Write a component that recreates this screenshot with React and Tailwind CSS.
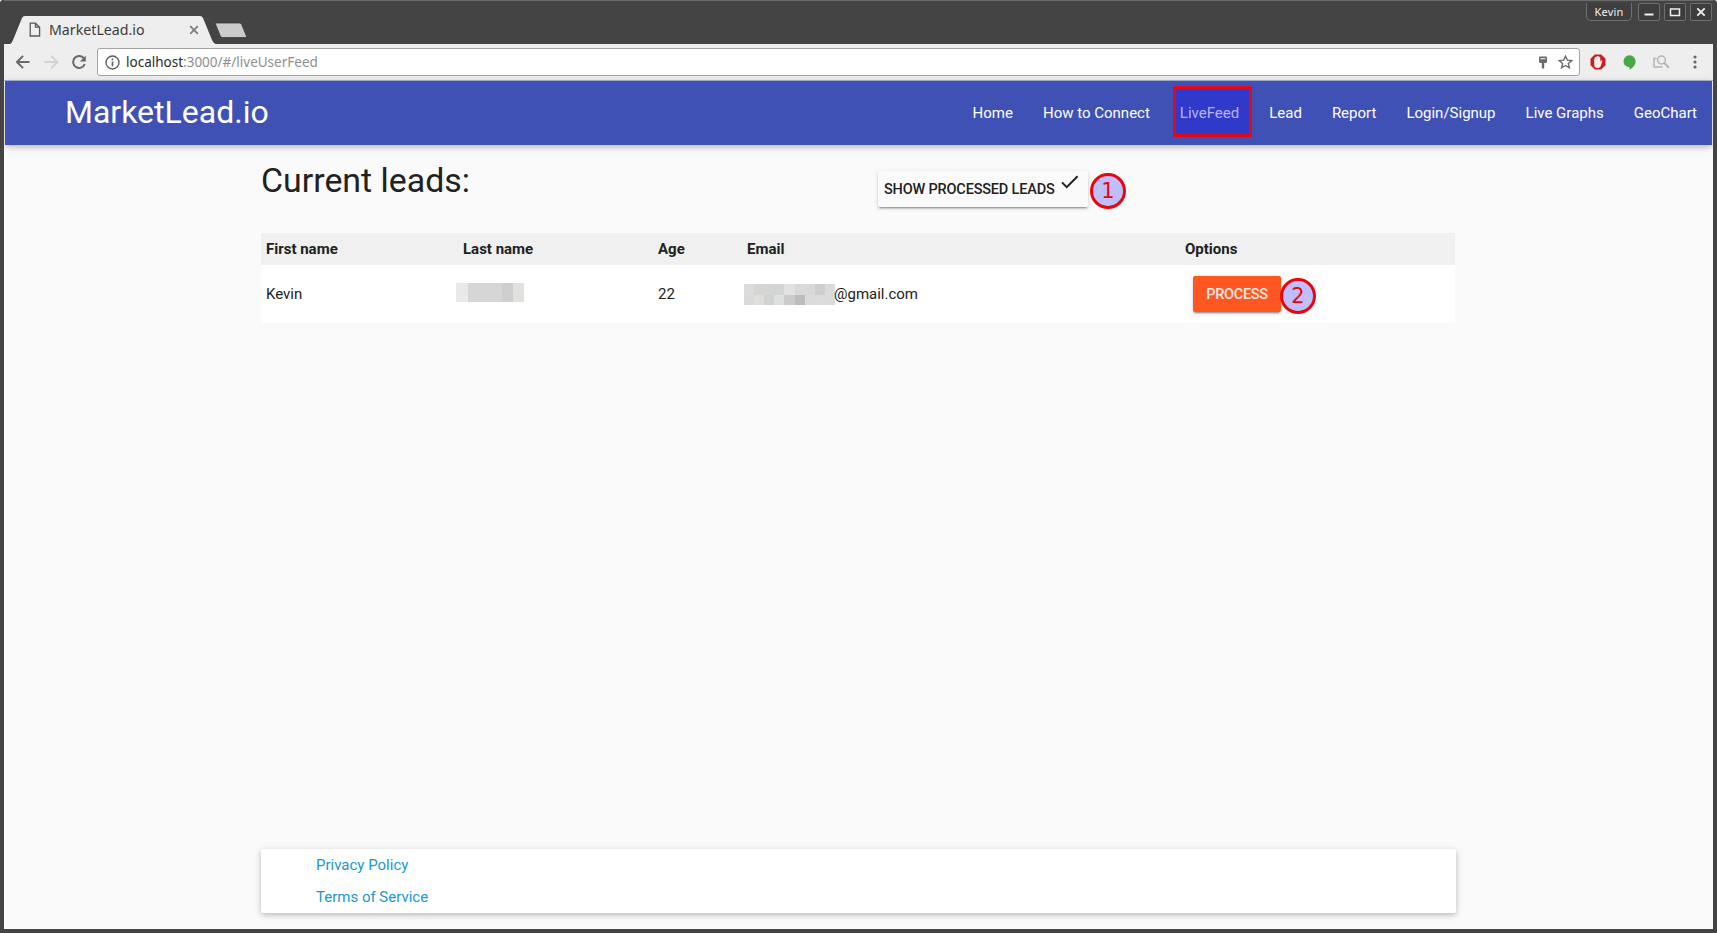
const navLinks = ['Home', 'How to Connect', 'LiveFeed', 'Lead', 'Report', 'Login/Signup', 'Live Graphs', 'GeoChart'];

const emailMosaic = [
  ['#dcdcdc', '#d5d5d4', '#d5d5d5', '#d3d5d4', '#e2e2e2', '#d9d9d9', '#d9d9d9', '#cecece', '#dadada'],
  ['#dadada', '#dfdfda', '#cfd3d1', '#dde0de', '#cbcbcb', '#bcbcbc', '#dbdbdb', '#dcdcdc', '#dbdbdb'],
];

function TitleBar() {
  return (
    <div className="flex h-[44px] shrink-0 items-start border-t border-[#6b6b6b] bg-[#444444]">
      <div className="relative mt-[15px] ml-[6px] h-[28px] w-[208px]">
        <svg className="absolute inset-0" width="208" height="28" viewBox="0 0 208 28">
          <path d="M0 28 Q2 27 3 24 L12 2 Q13 0 15 0 H190 Q192 0 193 2 L202 24 Q203 27 206 28 Z" fill="#eeeeee" />
        </svg>
        <div className="relative flex h-[28px] items-center pl-[19px]">
          <svg width="12" height="16" viewBox="0 0 12 16" fill="none" stroke="#5a5a5a" strokeWidth="1.3">
            <path d="M1.2 1.2 H6.5 L10.6 5.2 V14 H1.2 Z M6.5 1.2 V5.2 H10.6" />
          </svg>
          <span className="ml-[8px] w-[140px] font-['Noto_Sans',sans-serif] text-[14.2px] leading-[20px] text-[#3c3c3c]">MarketLead.io</span>
          <svg width="10" height="10" viewBox="0 0 10 10" stroke="#7a7a7a" strokeWidth="1.7">
            <path d="M1.2 1.2 L8.8 8.8 M8.8 1.2 L1.2 8.8" />
          </svg>
        </div>
      </div>
      <svg className="mt-[21px] -ml-[4px]" width="34" height="17" viewBox="0 0 34 17">
        <path d="M1 1 H25.5 Q27 1 27.7 2.5 L33 15.5 H8.5 Q7 15.5 6.3 14 Z" fill="#cbcbcb" stroke="#3a3a3a" strokeWidth="0.8" />
      </svg>
      <div className="mt-[2px] ml-auto flex pr-px">
        <div className="mr-[6px] flex h-[18px] w-[46px] items-center justify-center rounded-b-[5px] border border-t-0 border-[#707070] bg-[#3f3f3f] pt-px font-['Noto_Sans',sans-serif] text-[11px] tracking-[0.2px] text-[#f0f0f0]">Kevin</div>
        <div className="flex gap-[4px]">
          <WindowButton><path d="M6 11 H15" strokeWidth="2" /></WindowButton>
          <WindowButton><path d="M6 5.5 H15 V12 H6 Z M6 5.5 H15" strokeWidth="1.5" /></WindowButton>
          <WindowButton><path d="M6.8 4.8 L14.2 12.2 M14.2 4.8 L6.8 12.2" strokeWidth="1.8" /></WindowButton>
        </div>
      </div>
    </div>
  );
}

function WindowButton({ children }) {
  return (
    <div className="h-[18px] w-[22px] rounded-[2px] border border-[#707070] bg-[#3d3d3d]">
      <svg width="20" height="16" viewBox="0.5 0.5 20 16" fill="none" stroke="#f0f0f0">{children}</svg>
    </div>
  );
}

function Toolbar() {
  return (
    <div className="flex h-[37px] shrink-0 items-center border-b border-[#a9b5dc] bg-[#eeeeee]">
      <svg className="ml-[12px]" width="15" height="14" viewBox="0.5 0 15 14" fill="none" stroke="#6a6a6a" strokeWidth="2">
        <path d="M14 7 H1.6 M7.6 0.9 L1.5 7 L7.6 13.1" />
      </svg>
      <svg className="ml-[13px]" width="15" height="14" viewBox="0 0 15 14" fill="none" stroke="#d2d2d2" strokeWidth="2">
        <path d="M0.5 7 H13 M7.2 0.9 L13.3 7 L7.2 13.1" />
      </svg>
      <svg className="ml-[13px]" width="15" height="15" viewBox="0.4 0 15 15" fill="none" stroke="#6a6a6a" strokeWidth="2">
        <path d="M12.3 3.3 A6 6 0 1 0 13.2 9" />
        <path d="M14.2 0.6 V6.5 H8.3 Z" fill="#6a6a6a" stroke="none" />
      </svg>
      <div className="ml-[10px] flex h-[28px] w-[1483px] items-center rounded-[3px] border border-[#a3a3a3] bg-white pl-[7px]">
        <svg width="15" height="15" viewBox="0 0 15 15" fill="none" stroke="#5f5f5f" strokeWidth="1.4">
          <circle cx="7.5" cy="7.5" r="6.5" />
          <path d="M7.5 6.5 V11.2 M7.5 3.6 V5.2" strokeWidth="1.6" />
        </svg>
        <span className="ml-[6px] font-['Noto_Sans',sans-serif] text-[13.5px] leading-[20px] text-[#8e8e8e]"><span className="text-[#2b2b2b]">localhost</span>:3000/#/liveUserFeed</span>
        <svg className="ml-auto" width="8" height="13" viewBox="0 0 8 13" fill="#6a6a6a">
          <path fillRule="evenodd" d="M1 0.5 H7 Q8 0.5 8 1.5 V5.5 Q8 7 6.5 7 H5.2 V12.5 H2.8 V7 H1.5 Q0 7 0 5.5 V1.5 Q0 0.5 1 0.5 Z M1.5 2.2 V3.2 H6.5 V2.2 Z" />
        </svg>
        <svg className="mr-[6px] ml-[11px]" width="15" height="14" viewBox="0 0 15 14" fill="none" stroke="#6a6a6a" strokeWidth="1.4">
          <path d="M7.5 1.2 L9.3 5.1 L13.7 5.6 L10.4 8.5 L11.4 12.8 L7.5 10.5 L3.6 12.8 L4.6 8.5 L1.3 5.6 L5.7 5.1 Z" />
        </svg>
      </div>
      <svg className="ml-[10px]" width="16" height="16" viewBox="0 0 16 16">
        <path d="M4.8 0.5 H11.2 L15.5 4.8 V11.2 L11.2 15.5 H4.8 L0.5 11.2 V4.8 Z" fill="#c9201d" />
        <path d="M4 6 L5 3.2 L6.4 2.8 L7.6 2 L9 2.4 L10.2 3.4 L10.4 7.4 L11.4 6.2 L12.4 6.8 L10.6 12.6 L8.8 14 H6.2 L4.4 12.4 Z" fill="#f4eeee" />
      </svg>
      <svg className="ml-[17px]" width="13" height="15" viewBox="0 0 13 15">
        <path d="M6.5 0.3 A6 6 0 0 1 12.6 6.3 C12.6 10.2 9.8 13 6.5 14.7 V12.3 A6 6 0 0 1 6.5 0.3 Z" fill="#4ba647" />
      </svg>
      <svg className="ml-[17px]" width="17" height="14" viewBox="0 0 17 14" fill="none" stroke="#b5b5b5" strokeWidth="1.5">
        <path d="M3.5 3.5 H1 V12 H9.5" />
        <circle cx="8.5" cy="5" r="3.9" />
        <path d="M11.2 7.8 L16 12.8" strokeWidth="2" />
      </svg>
      <svg className="ml-[23px]" width="4" height="14" viewBox="0 0 4 14" fill="#666666">
        <circle cx="2" cy="2" r="1.6" /><circle cx="2" cy="7" r="1.6" /><circle cx="2" cy="12" r="1.6" />
      </svg>
    </div>
  );
}

function Marker({ label, className }) {
  return (
    <span className={`absolute flex h-[36px] w-[36px] items-center justify-center rounded-full border-[3px] border-[#e8060e] bg-[#bfbfff] font-['DejaVu_Sans',sans-serif] text-[21px] leading-none text-[#e8060e] ${className}`}>{label}</span>
  );
}

export default function App() {
  return (
    <div className="flex h-[933px] w-[1717px] flex-col overflow-hidden rounded-t-[3px] border-x-4 border-b-4 border-[#444444] bg-[#fafafa] font-[Roboto,sans-serif] text-[15px] text-[#212121]">
      <TitleBar />
      <Toolbar />
      <div className="mx-px flex min-h-0 flex-1 flex-col">
        <nav className="flex h-[64px] shrink-0 items-center justify-between bg-[#3f51b5] pl-[60px] text-white shadow-[0_2px_5px_0_rgba(0,0,0,0.16),0_2px_10px_0_rgba(0,0,0,0.12)]">
          <span className="pb-[2px] text-[32px] leading-[62px]">MarketLead.io</span>
          <ul className="flex">
            {navLinks.map((name) => (
              <li key={name} className={name === 'LiveFeed' ? 'relative px-[15px] leading-[64px] text-[#b5b4f5]' : 'relative px-[15px] leading-[64px]'}>
                {name === 'LiveFeed' && <span className="absolute top-[5px] right-[2px] left-[8px] h-[51px] border-[3px] border-[#dd0a1c] bg-[#2f3acb]" />}
                <span className="relative">{name}</span>
              </li>
            ))}
          </ul>
        </nav>
        <main className="ml-[256px] flex w-[1195px] flex-1 flex-col">
          <div className="flex h-[88px]">
            <h4 className="w-[617px] pt-[17px] text-[33.9px] leading-[37.6px]">Current leads:</h4>
            <div className="relative mt-[26px] h-[36px] w-[210px]">
              <button className="flex h-full w-full rounded-[2px] bg-[#fafafa] pl-[6px] text-[14.5px] leading-[36px] font-medium tracking-[-0.18px] whitespace-nowrap shadow-[0_2px_2px_0_rgba(0,0,0,0.14),0_1px_5px_0_rgba(0,0,0,0.12),0_3px_1px_-2px_rgba(0,0,0,0.2)]">
                <span className="w-[171px] pt-px text-left">SHOW PROCESSED LEADS</span>
                <svg className="mt-[4px] ml-[6px] shrink-0" width="18" height="14" viewBox="0 0 18 14" fill="none" stroke="#212121" strokeWidth="2">
                  <path d="M1 7.4 L5.7 12.1 L16.6 1.2" />
                </svg>
              </button>
              <Marker label="1" className="top-[2px] left-[212px]" />
            </div>
          </div>
          <table className="w-[1194px] table-fixed border-collapse text-left">
            <colgroup>
              <col className="w-[197px]" /><col className="w-[195px]" /><col className="w-[89px]" /><col className="w-[438px]" /><col />
            </colgroup>
            <thead>
              <tr className="h-[32px] bg-[#f0f0f0]">
                {['First name', 'Last name', 'Age', 'Email', 'Options'].map((h) => (
                  <th key={h} className="px-[5px] py-0 leading-[22px] font-bold">{h}</th>
                ))}
              </tr>
            </thead>
            <tbody>
              <tr className="h-[58px] bg-white">
                <td className="px-[5px]">Kevin</td>
                <td className="p-0">
                  <div className="-mt-[3px] -ml-[2px] flex h-[19px] w-[68px]">
                    <div className="w-[12px] bg-[#e9e9e9]" /><div className="w-[34px] bg-[#d6d6d6]" /><div className="w-[11px] bg-[#cfcfcd]" /><div className="w-[11px] bg-[#e1e1e0]" />
                  </div>
                </td>
                <td className="px-[5px]">22</td>
                <td className="p-0">
                  <div className="flex items-center pl-[2px]">
                    <div className="mt-px -mr-px grid h-[21px] w-[91px] grid-cols-9">
                      {emailMosaic.flat().map((color, i) => (
                        <div key={i} style={{ backgroundColor: color }} />
                      ))}
                    </div>
                    @gmail.com
                  </div>
                </td>
                <td className="p-0">
                  <div className="relative ml-[13px] h-[36px] w-[88px]">
                    <button className="h-full w-full rounded-[2px] bg-[#ff5722] pt-[2px] text-center text-[14.5px] leading-[34px] font-medium tracking-[-0.3px] text-[#ffe9e0] shadow-[0_2px_2px_0_rgba(0,0,0,0.14),0_1px_5px_0_rgba(0,0,0,0.12),0_3px_1px_-2px_rgba(0,0,0,0.2)]">PROCESS</button>
                    <Marker label="2" className="top-[2px] left-[87px]" />
                  </div>
                </td>
              </tr>
            </tbody>
          </table>
          <footer className="mt-auto mb-[16px] flex h-[64px] flex-col rounded-[2px] bg-white pl-[55px] leading-[32px] text-[#1a98cc] shadow-[0_2px_5px_0_rgba(0,0,0,0.16),0_2px_8px_0_rgba(0,0,0,0.12)]">
            <a>Privacy Policy</a>
            <a>Terms of Service</a>
          </footer>
        </main>
      </div>
    </div>
  );
}
